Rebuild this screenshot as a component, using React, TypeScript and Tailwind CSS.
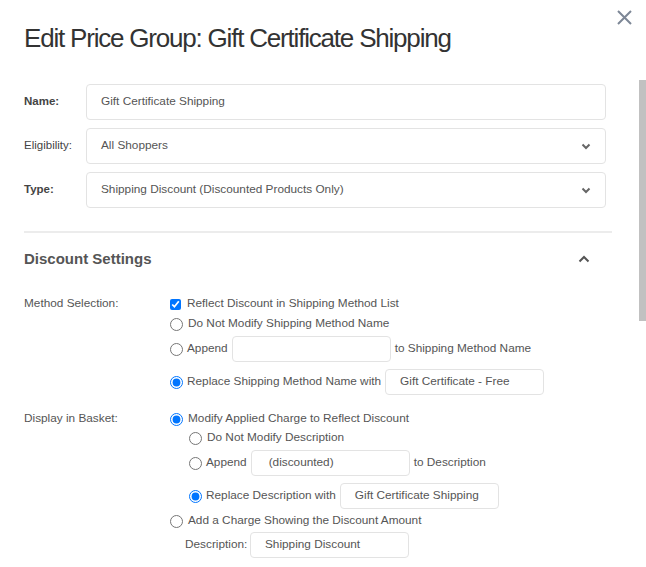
import React from "react";

const FIELDS = [
  { label: "Name:", value: "Gift Certificate Shipping", bold: true, select: false },
  { label: "Eligibility:", value: "All Shoppers", bold: false, select: true },
  { label: "Type:", value: "Shipping Discount (Discounted Products Only)", bold: true, select: true },
];

function ChevronDown() {
  return (
    <svg width="10" height="7" viewBox="0 0 10 7" className="flex-shrink-0">
      <path d="M1.5 1.5 L5 5 L8.5 1.5" fill="none" stroke="#666" strokeWidth="2" />
    </svg>
  );
}

function Radio({ checked }: { checked?: boolean }) {
  return <input type="radio" checked={!!checked} readOnly className="m-0 w-[13px] h-[13px] flex-shrink-0" />;
}

function SmallInput({ value, pad = "px-[15px]", w = "w-[159px]" }: { value?: string; pad?: string; w?: string }) {
  return (
    <div className={`${w} h-[26px] border border-[#e3e3e3] rounded-[4px] flex items-center ${pad} text-[11.8px] text-[#555]`}>
      {value}
    </div>
  );
}

export default function App() {
  return (
    <div className="relative w-[646px] h-[567px] overflow-hidden bg-white font-['Liberation_Sans',Arial,sans-serif] text-[#555]">
      {/* close */}
      <svg className="absolute top-[10px] left-[617px]" width="15" height="15" viewBox="0 0 15 15">
        <path d="M1 1 L14 14 M14 1 L1 14" stroke="#7d8796" strokeWidth="2" />
      </svg>
      {/* scrollbar thumb */}
      <div className="absolute left-[639px] top-[80px] w-[7px] h-[241px] bg-[#c1c1c1]" />

      <div className="pl-6 pr-[34px]">
        <h1 className="pt-[22px] text-[26px] leading-[32px] tracking-[-1.2px] text-[#333]">
          Edit Price Group: Gift Certificate Shipping
        </h1>

        <div className="mt-[30px] flex flex-col gap-[8px] pr-[6px]">
          {FIELDS.map(f => (
            <div key={f.label} className="flex items-center">
              <div className={`w-[62px] text-[11.5px] text-[#444] ${f.bold ? "font-bold" : ""}`}>{f.label}</div>
              <div className="flex-1 h-[36px] border border-[#e3e3e3] rounded-[4px] flex items-center justify-between pl-[14px] pr-[14px] text-[11.8px] text-[#555]">
                <span>{f.value}</span>
                {f.select && <ChevronDown />}
              </div>
            </div>
          ))}
        </div>

        <div className="mt-[23px] h-[2px] bg-[#ececec]" />

        {/* section header */}
        <div className="mt-[14px] flex items-center justify-between h-[24px] pr-[22px]">
          <span className="text-[15px] font-bold text-[#555]">Discount Settings</span>
          <svg width="12" height="8" viewBox="0 0 12 8">
            <path d="M1.5 6.5 L6 2 L10.5 6.5" fill="none" stroke="#555" strokeWidth="2" />
          </svg>
        </div>

        {/* method selection */}
        <div className="mt-[23px] flex text-[11.8px]">
          <div className="w-[146px] h-[20px] flex items-center">Method Selection:</div>
          <div className="flex flex-col">
            <div className="h-[20px] flex items-center gap-[6px]">
              <input type="checkbox" checked readOnly className="m-0 w-[11px] h-[11px]" />
              <span>Reflect Discount in Shipping Method List</span>
            </div>
            <div className="h-[20px] flex items-center gap-[5px]">
              <Radio />
              <span>Do Not Modify Shipping Method Name</span>
            </div>
            <div className="mt-[2px] h-[26px] flex items-center gap-[4px]">
              <Radio />
              <span>Append</span>
              <SmallInput />
              <span>to Shipping Method Name</span>
            </div>
            <div className="mt-[7px] h-[26px] flex items-center gap-[4px]">
              <Radio checked />
              <span>Replace Shipping Method Name with</span>
              <SmallInput value="Gift Certificate - Free" pad="px-[14px]" />
            </div>
          </div>
        </div>

        {/* display in basket */}
        <div className="mt-[14px] flex text-[11.8px]">
          <div className="w-[146px] h-[20px] flex items-center">Display in Basket:</div>
          <div className="flex flex-col">
            <div className="h-[20px] flex items-center gap-[5px]">
              <Radio checked />
              <span>Modify Applied Charge to Reflect Discount</span>
            </div>
            <div className="pl-[19px] flex flex-col">
              <div className="h-[18px] flex items-center gap-[5px]">
                <Radio />
                <span>Do Not Modify Description</span>
              </div>
              <div className="mt-[3px] h-[26px] flex items-center gap-[4px]">
                <Radio />
                <span>Append</span>
                <SmallInput value="(discounted)" pad="px-[17px]" />
                <span>to Description</span>
              </div>
              <div className="mt-[7px] h-[26px] flex items-center gap-[4px]">
                <Radio checked />
                <span>Replace Description with</span>
                <SmallInput value="Gift Certificate Shipping" pad="px-[14px]" />
              </div>
            </div>
            <div className="mt-[2px] h-[20px] flex items-center gap-[5px]">
              <Radio />
              <span>Add a Charge Showing the Discount Amount</span>
            </div>
            <div className="mt-[1px] pl-[15px] h-[26px] flex items-center gap-[4px]">
              <span className="w-[61px]">Description:</span>
              <SmallInput value="Shipping Discount" pad="px-[14px]" />
            </div>
          </div>
        </div>
      </div>
    </div>
  );
}
